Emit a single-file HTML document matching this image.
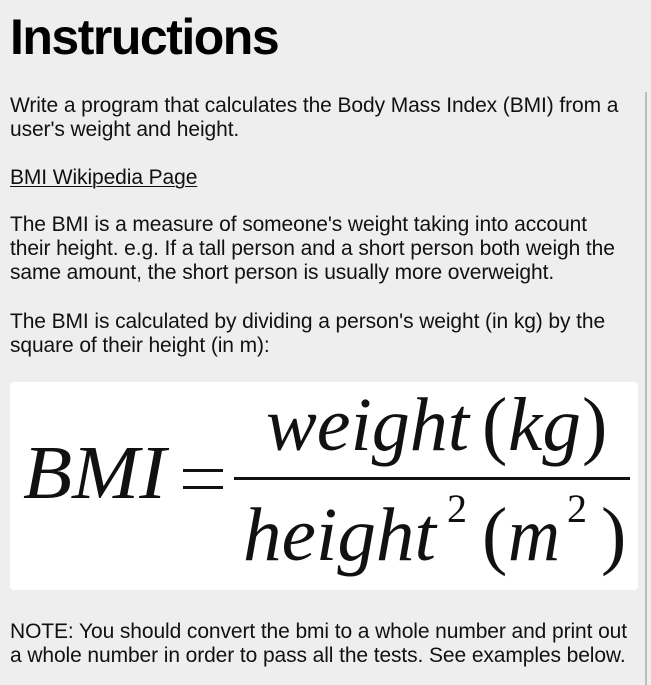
<!DOCTYPE html>
<html><head><meta charset="utf-8"><style>
html,body{margin:0;padding:0;background:#eeeeee;width:651px;height:685px;overflow:hidden;position:relative;font-family:"Liberation Sans",sans-serif;color:#111;}
.l{position:absolute;left:10px;font-size:21px;line-height:24px;white-space:nowrap;letter-spacing:-0.1px;}
h1{position:absolute;left:10px;top:9px;margin:0;font-size:50px;font-weight:bold;line-height:56px;letter-spacing:-1.5px;color:#000;}
.sb{position:absolute;left:645px;top:92px;width:2px;height:600px;background:#bdbdbd;}
.box{position:absolute;left:10px;top:382px;width:628px;height:208px;background:#fff;border-radius:4px;}
u{text-decoration-thickness:1px;text-underline-offset:2px;}
</style></head><body>
<h1>Instructions</h1>
<div class="sb"></div>
<div class="l" style="top:94px">Write a program that calculates the Body Mass Index (BMI) from a</div>
<div class="l" style="top:118px">user's weight and height.</div>
<div class="l" style="top:166px"><u>BMI Wikipedia Page</u></div>
<div class="l" style="top:213px">The BMI is a measure of someone's weight taking into account</div>
<div class="l" style="top:237px">their height. e.g. If a tall person and a short person both weigh the</div>
<div class="l" style="top:261px">same amount, the short person is usually more overweight.</div>
<div class="l" style="top:310px">The BMI is calculated by dividing a person's weight (in kg) by the</div>
<div class="l" style="top:334px">square of their height (in m):</div>
<div class="box">
<svg width="628" height="208" viewBox="0 0 628 208" style="position:absolute;left:0;top:0">
<g font-family="Liberation Serif, serif" font-style="italic" fill="#111">
<text x="13" y="116" font-size="76" textLength="143" lengthAdjust="spacingAndGlyphs">BMI</text>
<text x="256" y="68" font-size="76" textLength="203" lengthAdjust="spacingAndGlyphs">weight</text>
<text x="498" y="68" font-size="76" textLength="73" lengthAdjust="spacingAndGlyphs">kg</text>
<text x="233" y="178" font-size="76" textLength="193" lengthAdjust="spacingAndGlyphs">height</text>
<text x="498" y="178" font-size="76" textLength="52" lengthAdjust="spacingAndGlyphs">m</text>
</g>
<g font-family="Liberation Serif, serif" fill="#111">
<text x="472" y="68" font-size="76">(</text>
<text x="572" y="68" font-size="76">)</text>
<text x="472" y="178" font-size="76">(</text>
<text x="591" y="178" font-size="76">)</text>
<text x="437" y="140" font-size="40">2</text>
<text x="557" y="140" font-size="40">2</text>
</g>
<rect x="173" y="87" width="40" height="3" fill="#111"/>
<rect x="173" y="104" width="40" height="3" fill="#111"/>
<rect x="224" y="95" width="396" height="3" fill="#111"/>
</svg>
</div>
<div class="l" style="top:620px">NOTE: You should convert the bmi to a whole number and print out</div>
<div class="l" style="top:644px">a whole number in order to pass all the tests. See examples below.</div>
</body></html>
